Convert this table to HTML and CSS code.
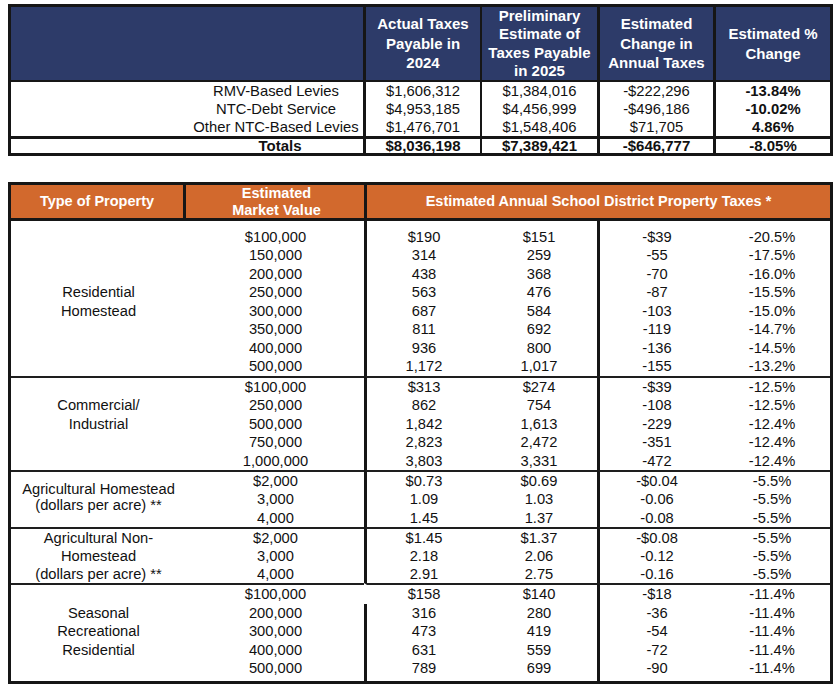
FILE: index.html
```html
<!DOCTYPE html>
<html lang="en">
<head>
<meta charset="utf-8">
<title>Estimated School District Property Taxes</title>
<link rel="stylesheet" href="styles.css">
</head>
<body>
<table class="summary">
  <colgroup>
    <col class="s-label"><col class="s-n1"><col class="s-n2"><col class="s-n3"><col class="s-n4">
  </colgroup>
  <thead>
    <tr>
      <th></th>
      <th>Actual Taxes<br>Payable in<br>2024</th>
      <th class="tight">Preliminary<br>Estimate of<br>Taxes Payable<br>in 2025</th>
      <th>Estimated<br>Change in<br>Annual Taxes</th>
      <th>Estimated %<br>Change</th>
    </tr>
  </thead>
  <tbody>
    <tr><td class="lbl">RMV-Based Levies</td><td>$1,606,312</td><td>$1,384,016</td><td>-$222,296</td><td class="b">-13.84%</td></tr>
    <tr><td class="lbl">NTC-Debt Service</td><td>$4,953,185</td><td>$4,456,999</td><td>-$496,186</td><td class="b">-10.02%</td></tr>
    <tr><td class="lbl">Other NTC-Based Levies</td><td>$1,476,701</td><td>$1,548,406</td><td>$71,705</td><td class="b">4.86%</td></tr>
    <tr class="totals"><td class="tot">Totals</td><td>$8,036,198</td><td>$7,389,421</td><td>-$646,777</td><td>-8.05%</td></tr>
  </tbody>
</table>

<table class="detail">
  <colgroup>
    <col class="d-type"><col class="d-mv"><col class="d-v1"><col class="d-v2"><col class="d-chg"><col class="d-pct">
  </colgroup>
  <thead>
    <tr>
      <th>Type of Property</th>
      <th class="two">Estimated<br>Market Value</th>
      <th colspan="4">Estimated Annual School District Property Taxes *</th>
    </tr>
  </thead>
  <tbody class="grp g1">
    <tr><td rowspan="8" class="type">Residential<br>Homestead</td><td class="mv">$100,000</td><td class="v1">$190</td><td>$151</td><td class="chg">-$39</td><td>-20.5%</td></tr>
    <tr><td class="mv">150,000</td><td class="v1">314</td><td>259</td><td class="chg">-55</td><td>-17.5%</td></tr>
    <tr><td class="mv">200,000</td><td class="v1">438</td><td>368</td><td class="chg">-70</td><td>-16.0%</td></tr>
    <tr><td class="mv">250,000</td><td class="v1">563</td><td>476</td><td class="chg">-87</td><td>-15.5%</td></tr>
    <tr><td class="mv">300,000</td><td class="v1">687</td><td>584</td><td class="chg">-103</td><td>-15.0%</td></tr>
    <tr><td class="mv">350,000</td><td class="v1">811</td><td>692</td><td class="chg">-119</td><td>-14.7%</td></tr>
    <tr><td class="mv">400,000</td><td class="v1">936</td><td>800</td><td class="chg">-136</td><td>-14.5%</td></tr>
    <tr><td class="mv">500,000</td><td class="v1">1,172</td><td>1,017</td><td class="chg">-155</td><td>-13.2%</td></tr>
  </tbody>
  <tbody class="grp g2">
    <tr><td rowspan="5" class="type com">Commercial/<br>Industrial</td><td class="mv">$100,000</td><td class="v1">$313</td><td>$274</td><td class="chg">-$39</td><td>-12.5%</td></tr>
    <tr><td class="mv">250,000</td><td class="v1">862</td><td>754</td><td class="chg">-108</td><td>-12.5%</td></tr>
    <tr><td class="mv">500,000</td><td class="v1">1,842</td><td>1,613</td><td class="chg">-229</td><td>-12.4%</td></tr>
    <tr><td class="mv">750,000</td><td class="v1">2,823</td><td>2,472</td><td class="chg">-351</td><td>-12.4%</td></tr>
    <tr><td class="mv">1,000,000</td><td class="v1">3,803</td><td>3,331</td><td class="chg">-472</td><td>-12.4%</td></tr>
  </tbody>
  <tbody class="grp g3">
    <tr><td rowspan="3" class="type ag1">Agricultural Homestead<br>(dollars per acre) **</td><td class="mv">$2,000</td><td class="v1">$0.73</td><td>$0.69</td><td class="chg">-$0.04</td><td>-5.5%</td></tr>
    <tr><td class="mv">3,000</td><td class="v1">1.09</td><td>1.03</td><td class="chg">-0.06</td><td>-5.5%</td></tr>
    <tr><td class="mv">4,000</td><td class="v1">1.45</td><td>1.37</td><td class="chg">-0.08</td><td>-5.5%</td></tr>
  </tbody>
  <tbody class="grp g4">
    <tr><td rowspan="3" class="type">Agricultural Non-<br>Homestead<br>(dollars per acre) **</td><td class="mv">$2,000</td><td class="v1">$1.45</td><td>$1.37</td><td class="chg">-$0.08</td><td>-5.5%</td></tr>
    <tr><td class="mv">3,000</td><td class="v1">2.18</td><td>2.06</td><td class="chg">-0.12</td><td>-5.5%</td></tr>
    <tr><td class="mv">4,000</td><td class="v1">2.91</td><td>2.75</td><td class="chg">-0.16</td><td>-5.5%</td></tr>
  </tbody>
  <tbody class="grp g5">
    <tr><td rowspan="5" class="type sea">Seasonal<br>Recreational<br>Residential</td><td class="mv">$100,000</td><td class="v1 open">$158</td><td>$140</td><td class="chg">-$18</td><td>-11.4%</td></tr>
    <tr><td class="mv">200,000</td><td class="v1">316</td><td>280</td><td class="chg">-36</td><td>-11.4%</td></tr>
    <tr><td class="mv">300,000</td><td class="v1">473</td><td>419</td><td class="chg">-54</td><td>-11.4%</td></tr>
    <tr><td class="mv">400,000</td><td class="v1">631</td><td>559</td><td class="chg">-72</td><td>-11.4%</td></tr>
    <tr class="last"><td class="mv">500,000</td><td class="v1">789</td><td>699</td><td class="chg">-90</td><td>-11.4%</td></tr>
  </tbody>
</table>
</body>
</html>
```

FILE: styles.css
```css
body {
  margin: 0;
  padding: 4px 8px 0;
  background: #ffffff;
  font-family: "Liberation Sans", Arial, sans-serif;
  color: #111111;
}

table {
  box-sizing: border-box;
  width: 825px;
  table-layout: fixed;
  border-collapse: separate;
  border-spacing: 0;
  border: 3px solid #161616;
}

th, td {
  padding: 0;
  text-align: center;
  white-space: nowrap;
}

/* ---------- summary table ---------- */
.s-label { width: 352px; }
.s-n1 { width: 117px; }
.s-n2 { width: 117px; }
.s-n3 { width: 116px; }
.s-n4 { width: 117px; }

.summary th {
  background: #2d3b69;
  color: #ffffff;
  font-size: 15px;
  font-weight: bold;
  line-height: 19.5px;
  vertical-align: middle;
  border-bottom: 2px solid #161616;
}

.summary th.tight {
  line-height: 18.3px;
}

.summary td {
  font-size: 14.8px;
  line-height: 18px;
}

.summary th + th,
.summary td + td {
  border-left: 3px solid #161616;
}

.summary tr > :nth-child(3) {
  border-left-width: 2px;
}

.summary .lbl {
  padding-left: 178px;
}

.summary .b {
  font-weight: bold;
}

.summary .totals td {
  font-weight: bold;
  font-size: 15px;
  line-height: 14px;
  border-top: 3px solid #161616;
}

.summary .totals .tot {
  padding-left: 186px;
}

/* ---------- detail table ---------- */
.detail {
  margin-top: 26px;
}

.d-type { width: 172px; }
.d-mv { width: 181px; }
.d-v1 { width: 117px; }
.d-v2 { width: 116px; }
.d-chg { width: 117px; }
.d-pct { width: 116px; }

.detail th {
  background: #d2692d;
  color: #ffffff;
  font-size: 14.5px;
  font-weight: bold;
  line-height: 33px;
  vertical-align: middle;
  border-bottom: 3px solid #161616;
}

.detail th + th {
  border-left: 3px solid #161616;
}

.detail th.two {
  line-height: 16.5px;
  padding-left: 3px;
}

.detail td {
  font-size: 14.7px;
  line-height: 18.5px;
}

.detail .mv {
  padding-left: 4px;
}

.detail .v1,
.detail .chg {
  border-left: 3px solid #161616;
}

.detail .v1.open {
  border-left-color: transparent;
}

.detail .type {
  vertical-align: middle;
  padding-left: 3px;
}

.grp > tr:first-child > td {
  border-top: 2px solid #1e1e1e;
}

.g1 > tr:first-child > td {
  border-top: none;
  padding-top: 6.5px;
}

.g3 td,
.g4 td {
  line-height: 18.2px;
}

.detail .com {
  padding-bottom: 18px;
}

.detail .ag1 {
  line-height: 16px;
  padding-bottom: 4px;
}

.g5 .last td,
.detail .sea {
  padding-bottom: 3px;
}
```
